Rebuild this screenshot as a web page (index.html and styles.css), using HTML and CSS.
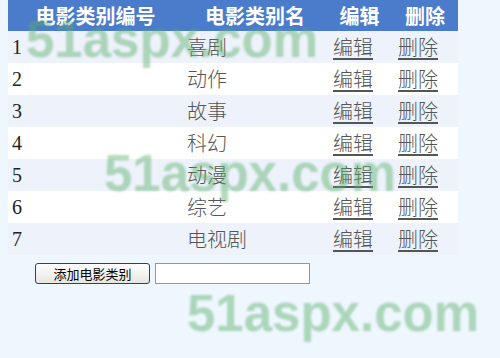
FILE: index.html
```html
<!DOCTYPE html>
<html lang="zh-CN">
<head>
    <meta charset="UTF-8">
    <title>电影类别管理</title>
    <link rel="stylesheet" href="styles.css">
</head>
<body>
    <table class="grid">
        <colgroup>
            <col class="c-id">
            <col class="c-name">
            <col class="c-edit">
            <col class="c-del">
        </colgroup>
        <tr class="head">
            <th>电影类别编号</th>
            <th>电影类别名</th>
            <th>编辑</th>
            <th>删除</th>
        </tr>
        <tr class="alt"><td class="num">1</td><td>喜剧</td><td class="op"><a href="#">编辑</a></td><td class="op"><a href="#">删除</a></td></tr>
        <tr><td class="num">2</td><td>动作</td><td class="op"><a href="#">编辑</a></td><td class="op"><a href="#">删除</a></td></tr>
        <tr class="alt"><td class="num">3</td><td>故事</td><td class="op"><a href="#">编辑</a></td><td class="op"><a href="#">删除</a></td></tr>
        <tr><td class="num">4</td><td>科幻</td><td class="op"><a href="#">编辑</a></td><td class="op"><a href="#">删除</a></td></tr>
        <tr class="alt"><td class="num">5</td><td>动漫</td><td class="op"><a href="#">编辑</a></td><td class="op"><a href="#">删除</a></td></tr>
        <tr><td class="num">6</td><td>综艺</td><td class="op"><a href="#">编辑</a></td><td class="op"><a href="#">删除</a></td></tr>
        <tr class="alt"><td class="num">7</td><td>电视剧</td><td class="op"><a href="#">编辑</a></td><td class="op"><a href="#">删除</a></td></tr>
    </table>

    <div class="add-row">
        <button type="button">添加电影类别</button>
        <input type="text">
    </div>

    <!-- watermark -->
    <div class="mark mark1">51aspx.com</div>
    <div class="mark mark2">51aspx.com</div>
    <div class="mark mark3">51aspx.com</div>
</body>
</html>
```

FILE: styles.css
```css
body {
    margin: 0 8px;
    background-color: #eef6fe;
    font-family: "Noto Sans CJK SC", sans-serif;
    color: #333;
    position: relative;
    height: 358px;
    overflow: hidden;
}
.grid {
    border-collapse: collapse;
    table-layout: fixed;
    width: 450px;
}
.c-id { width: 175px; }
.c-name { width: 144px; }
.c-edit { width: 65px; }
.c-del { width: 66px; }
.grid th {
    background-color: #4b7bcb;
    color: #fff;
    font-size: 20px;
    font-weight: bold;
    height: 31px;
    padding: 0;
    line-height: 31px;
    text-align: center;
}
.grid td {
    height: 32px;
    padding: 0 0 0 4px;
    font-size: 20px;
    font-weight: 300;
    line-height: 32px;
    background-color: #fff;
    color: #555;
}
.grid tr.alt td {
    background-color: #edf2fb;
}
.grid td.num {
    font-family: "Liberation Serif", serif;
    font-weight: normal;
    color: #222;
}
.grid td.op {
    padding-left: 6px;
}
.grid a {
    color: #555;
    text-decoration: underline;
    text-underline-offset: 3px;
}
.add-row {
    display: flex;
    align-items: center;
    gap: 5px;
    margin-top: 8px;
    padding-left: 27px;
}
.add-row button {
    width: 115px;
    height: 21px;
    padding: 0;
    font-family: "Noto Sans CJK SC", sans-serif;
    font-size: 13px;
    line-height: 19px;
    color: #000;
    border: 1px solid #25417a;
    border-radius: 3px;
    background: linear-gradient(#ffffff, #e6e6e0);
}
.add-row input {
    width: 155px;
    height: 21px;
    box-sizing: border-box;
    border: 1px solid #7f9db9;
    background-color: #fff;
    margin: 0;
}
.mark {
    position: absolute;
    font-family: "Liberation Sans", sans-serif;
    font-weight: bold;
    font-size: 51px;
    line-height: 52px;
    color: rgba(90, 175, 105, 0.45);
    filter: blur(0.9px);
    white-space: nowrap;
    pointer-events: none;
}
.mark1 { left: 18px; top: 14px; }
.mark2 { left: 96px; top: 148px; }
.mark3 { left: 179px; top: 288px; }
```
